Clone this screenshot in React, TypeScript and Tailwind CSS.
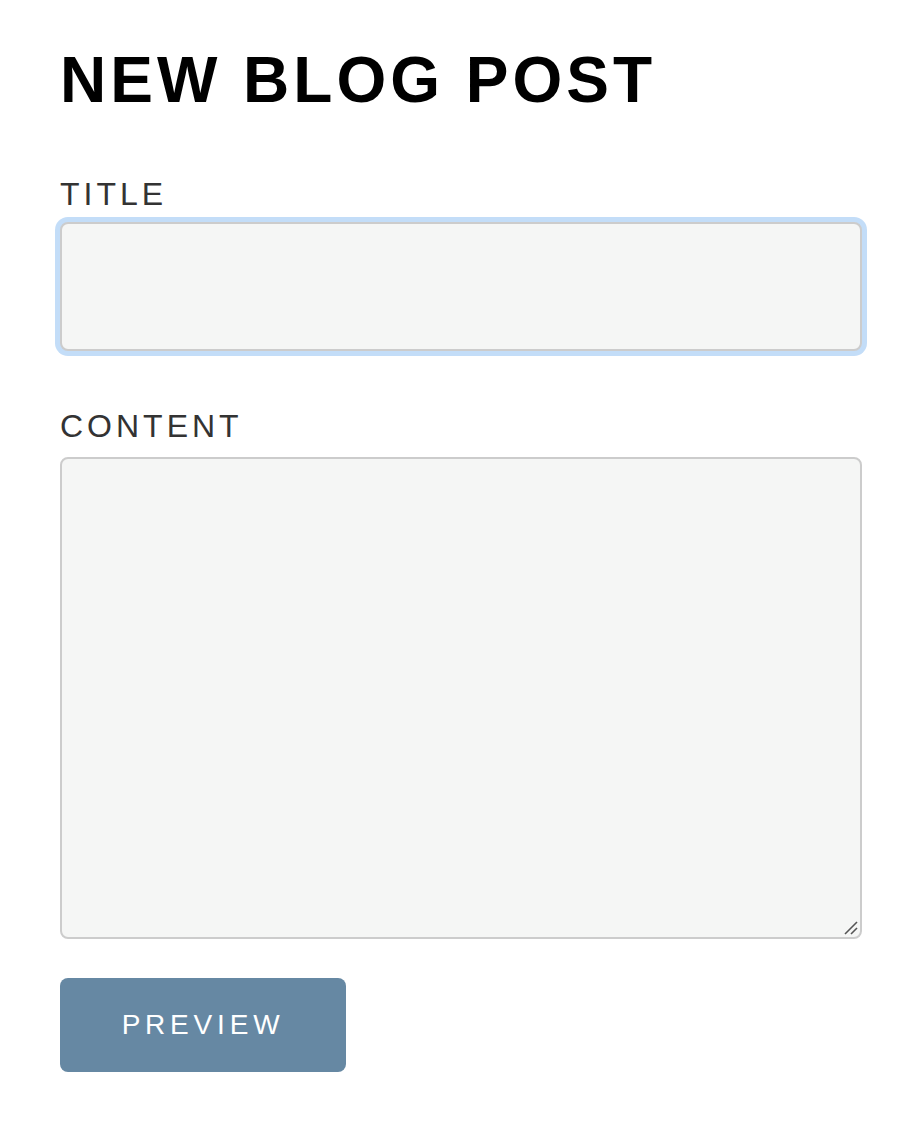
import React from "react";

export default function App() {
  return (
    <div className="min-h-[1136px] bg-white pl-[60px] pr-[46px] pt-[43px] [font-family:'Liberation_Sans',Arial,sans-serif]">
      <h1 className="text-[64px] font-bold leading-[74px] tracking-[4px] text-black">NEW BLOG POST</h1>
      <label className="mt-[59px] block text-[32px] leading-[37px] tracking-[4px] text-[#333333]">TITLE</label>
      <input
        type="text"
        className="mt-[9px] block h-[129px] w-[802px] rounded-[8px] border-2 border-[#cccccc] bg-[#f5f6f5] px-3 text-[28px] shadow-[0_0_0_5px_#c3ddf8] outline-none"
      />
      <label className="mt-[57px] block text-[32px] leading-[37px] tracking-[4px] text-[#333333]">CONTENT</label>
      <div className="relative mt-[12px] w-[802px]">
        <textarea className="block h-[482px] w-[802px] resize-none rounded-[8px] border-2 border-[#cccccc] bg-[#f5f6f5] p-3 text-[28px] outline-none" />
        <svg className="pointer-events-none absolute bottom-[3px] right-[3px]" width="16" height="16" viewBox="0 0 16 16">
          <line x1="2" y1="14" x2="14" y2="2" stroke="#555" strokeWidth="1.6" />
          <line x1="8" y1="14" x2="14" y2="8" stroke="#555" strokeWidth="1.6" />
        </svg>
      </div>
      <button className="mt-[39px] flex h-[94px] w-[286px] items-center justify-center rounded-[8px] bg-[#6688a3] text-[28px] tracking-[4.8px] text-white">
        PREVIEW
      </button>
    </div>
  );
}
